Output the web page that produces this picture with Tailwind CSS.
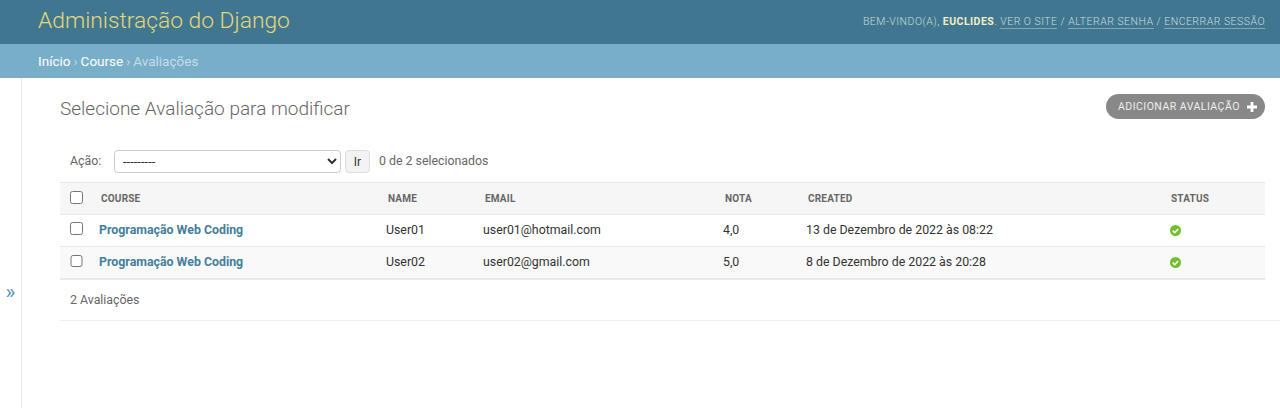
<!DOCTYPE html>
<html lang="pt-BR">
<head>
<meta charset="utf-8">
<script src="https://cdn.jsdelivr.net/npm/@tailwindcss/browser@4"></script>
<title>Avaliações</title>
</head>
<body class="h-[408px] overflow-hidden bg-white font-['Roboto',sans-serif] text-[12.35px] text-[#333]">
<header class="flex h-[44px] items-center justify-between bg-[#417690] pl-[38px] pr-[15px]">
  <h1 class="-mt-[2px] text-[22.8px] font-light leading-none text-[#e5d778]">Administração do Django</h1>
  <div class="text-[10.5px] tracking-[0.475px] text-[#c9dcdc] font-light">BEM-VINDO(A), <strong class="font-bold text-[#f0eec5]">EUCLIDES</strong>. <a class="border-b border-[#7fa6ba]">VER O SITE</a> / <a class="border-b border-[#7fa6ba]">ALTERAR SENHA</a> / <a class="border-b border-[#7fa6ba]">ENCERRAR SESSÃO</a></div>
</header>
<nav class="flex h-[34px] items-center bg-[#79aec8] pl-[38px] text-[13.5px] text-[#c4dce8]">
  <span class="text-white">Início</span><span class="px-[3px]">›</span><span class="text-white">Course</span><span class="px-[3px]">›</span><span>Avaliações</span>
</nav>
<div class="flex h-[330px]">
  <aside class="flex w-[22px] shrink-0 items-center justify-center border-r border-[#eaeaea] pt-[98px] text-[21px] leading-none text-[#5b94b1]">»</aside>
  <main class="min-w-0 flex-1 pl-[38px] pr-[15px]">
    <div class="flex h-[59px] items-start justify-between pt-[18px]">
      <h2 class="text-[19px] font-light leading-[25px] text-[#666]">Selecione Avaliação para modificar</h2>
      <a class="-mt-[1px] flex h-[25px] w-[159px] -translate-y-[1px] items-center justify-between rounded-full bg-[#888] pl-[12px] pr-[8px] text-[10.5px] tracking-[0.475px] text-[#eee]">ADICIONAR AVALIAÇÃO
        <svg width="10" height="10" viewBox="0 0 10 10"><path d="M3.6 0h2.8v3.6H10v2.8H6.4V10H3.6V6.4H0V3.6h3.6z" fill="#fff"/></svg>
      </a>
    </div>
    <div class="flex h-[45px] items-start pt-[13px] text-[#666]">
      <span class="ml-[10px] w-[44px] pt-[2px]">Ação:</span>
      <select class="h-[23px] w-[227px] rounded-[4px] border border-[#ccc] bg-white pl-[4px] text-[13px] text-[#333]"><option>---------</option></select>
      <button class="ml-[4px] h-[23px] w-[25px] rounded-[4px] border border-[#ddd] bg-[#f3f3f3] text-[12px] text-[#333]">Ir</button>
      <span class="ml-[9px] pt-[2px] text-[#666]">0 de 2 selecionados</span>
    </div>
    <table class="w-[1205px] table-fixed border-collapse">
      <colgroup><col class="w-[39px]"><col class="w-[287px]"><col class="w-[97px]"><col class="w-[240px]"><col class="w-[83px]"><col class="w-[363px]"><col></colgroup>
      <thead>
        <tr class="h-[32px] border-y border-[#e8e8e8] bg-[#f6f6f6] text-left text-[10px] font-bold tracking-[0.2px] text-[#666]">
          <th class="pl-[10px]"><input type="checkbox" class="mb-[2px] block size-[12.5px]"></th>
          <th class="pl-[2px] font-bold">COURSE</th><th class="pl-[2px] font-bold">NAME</th><th class="pl-[2px] font-bold">EMAIL</th><th class="pl-[2px] font-bold">NOTA</th><th class="pl-[2px] font-bold">CREATED</th><th class="pl-[2px] font-bold">STATUS</th>
        </tr>
      </thead>
      <tbody>
        <tr class="h-[32px] border-b border-[#e8e8e8]">
          <td class="pb-[1px] pl-[10px]"><input type="checkbox" class="mb-[3px] block size-[12.5px]"></td>
          <td class="pb-[1px] font-bold text-[#447e9b]">Programação Web Coding</td><td class="pb-[1px]">User01</td><td class="pb-[1px]">user01@hotmail.com</td><td class="pb-[1px]">4,0</td><td class="pb-[1px]">13 de Dezembro de 2022 às 08:22</td>
          <td class="pl-[1px]"><svg width="11" height="11" viewBox="0 0 11 11" class="mb-[1px]"><circle cx="5.5" cy="5.5" r="5.5" fill="#70bf2b"/><path d="M2.8 5.7l1.9 1.9 3.5-3.6" fill="none" stroke="#fff" stroke-width="1.7"/></svg></td>
        </tr>
        <tr class="h-[32px] border-b-2 border-[#e8e8e8] bg-[#f9f9f9]">
          <td class="pl-[10px]"><input type="checkbox" class="mb-[3px] block size-[12.5px]"></td>
          <td class="font-bold text-[#447e9b]">Programação Web Coding</td><td>User02</td><td>user02@gmail.com</td><td>5,0</td><td>8 de Dezembro de 2022 às 20:28</td>
          <td class="pl-[1px]"><svg width="11" height="11" viewBox="0 0 11 11" class="mt-[1px]"><circle cx="5.5" cy="5.5" r="5.5" fill="#70bf2b"/><path d="M2.8 5.7l1.9 1.9 3.5-3.6" fill="none" stroke="#fff" stroke-width="1.7"/></svg></td>
        </tr>
      </tbody>
    </table>
    <p class="-mr-[15px] flex h-[41px] items-center border-b border-[#eee] pl-[10px] pt-[1px] text-[#666]">2 Avaliações</p>
  </main>
</div>
</body>
</html>
